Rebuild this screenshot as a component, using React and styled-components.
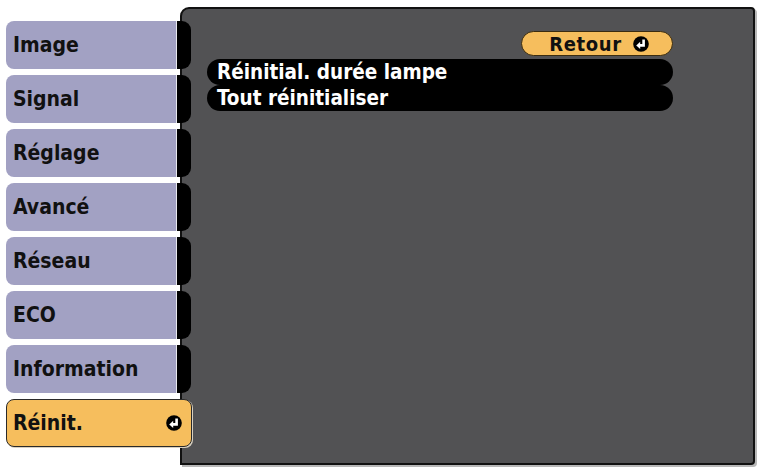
import React from 'react';
import styled, { createGlobalStyle } from 'styled-components';

const GlobalStyle = createGlobalStyle`
  html, body {
    margin: 0;
    padding: 0;
    background: #ffffff;
  }
  body {
    font-family: "DejaVu Sans Condensed", "DejaVu Sans", sans-serif;
  }
`;

const Screen = styled.div`
  display: flex;
  align-items: flex-start;
  width: 759px;
  height: 468px;
  padding: 7px 0 0 6px;
  box-sizing: border-box;
`;

const TabColumn = styled.div`
  display: flex;
  flex-direction: column;
  gap: 6px;
  margin-top: 14px;
  margin-right: -12px;
  width: 186px;
  position: relative;
  z-index: 1;
`;

const TabRow = styled.div`
  display: flex;
  height: 48px;
`;

const TabBody = styled.div`
  width: 171px;
  display: flex;
  align-items: center;
  padding-left: 7px;
  box-sizing: border-box;
  background: #a2a1c3;
  border-radius: 8px 0 0 8px;
  color: #111;
  font-size: 21px;
  font-weight: bold;
  border-right: 1px solid #e8e8ee;
`;

const TabNub = styled.div`
  width: 14px;
  background: #000;
  border-radius: 0 9px 9px 0;
`;

const ActiveTab = styled.div`
  height: 48px;
  display: flex;
  align-items: center;
  justify-content: space-between;
  padding: 0 9px 0 6px;
  box-sizing: border-box;
  background: #f6be5d;
  border: 1px solid #2a2a2a;
  border-radius: 8px;
  color: #111;
  font-size: 21px;
  font-weight: bold;
  box-shadow: 1px 1px 0 #d8d0c0;
`;

const Panel = styled.div`
  width: 575px;
  height: 458px;
  box-sizing: border-box;
  background: #525254;
  border: 2px solid #111;
  border-radius: 9px 4px 4px 0;
  box-shadow: 2px 2px 0 #b8b8b8;
  display: flex;
  flex-direction: column;
  padding: 22px 80px 0 25px;
`;

const ReturnButton = styled.div`
  align-self: flex-end;
  width: 152px;
  height: 25px;
  box-sizing: border-box;
  display: flex;
  align-items: center;
  justify-content: center;
  gap: 11px;
  padding-left: 4px;
  background: #f6be5d;
  border: 1px solid #3a2c10;
  border-radius: 13px;
  color: #111;
  font-size: 20px;
  font-weight: bold;
  letter-spacing: 0.6px;
`;

const MenuList = styled.div`
  display: flex;
  flex-direction: column;
  margin-top: 3px;
`;

const MenuItem = styled.div`
  height: 26px;
  display: flex;
  align-items: center;
  padding-left: 10px;
  background: #000;
  border-radius: 13px;
  color: #fff;
  font-size: 20.5px;
  font-weight: bold;
`;

const EnterIcon = ({ size = 16 }) => (
  <svg width={size} height={size} viewBox="0 0 16 16">
    <circle cx="8" cy="8" r="7.8" fill="#000" />
    <path d="M10.6 3.4 V9.4 H6.2" stroke="#fff" strokeWidth="2.6" fill="none" />
    <path d="M7.2 5.8 L3.2 9.4 L7.2 13 Z" fill="#fff" />
  </svg>
);

const tabs = ['Image', 'Signal', 'Réglage', 'Avancé', 'Réseau', 'ECO', 'Information'];
const items = ['Réinitial. durée lampe', 'Tout réinitialiser'];

export default function App() {
  return (
    <>
      <GlobalStyle />
      <Screen>
        <TabColumn>
          {tabs.map(label => (
            <TabRow key={label}>
              <TabBody>{label}</TabBody>
              <TabNub />
            </TabRow>
          ))}
          <ActiveTab>
            <span>Réinit.</span>
            <EnterIcon />
          </ActiveTab>
        </TabColumn>
        <Panel>
          <ReturnButton>
            <span>Retour</span>
            <EnterIcon />
          </ReturnButton>
          <MenuList>
            {items.map(item => (
              <MenuItem key={item}>{item}</MenuItem>
            ))}
          </MenuList>
        </Panel>
      </Screen>
    </>
  );
}
